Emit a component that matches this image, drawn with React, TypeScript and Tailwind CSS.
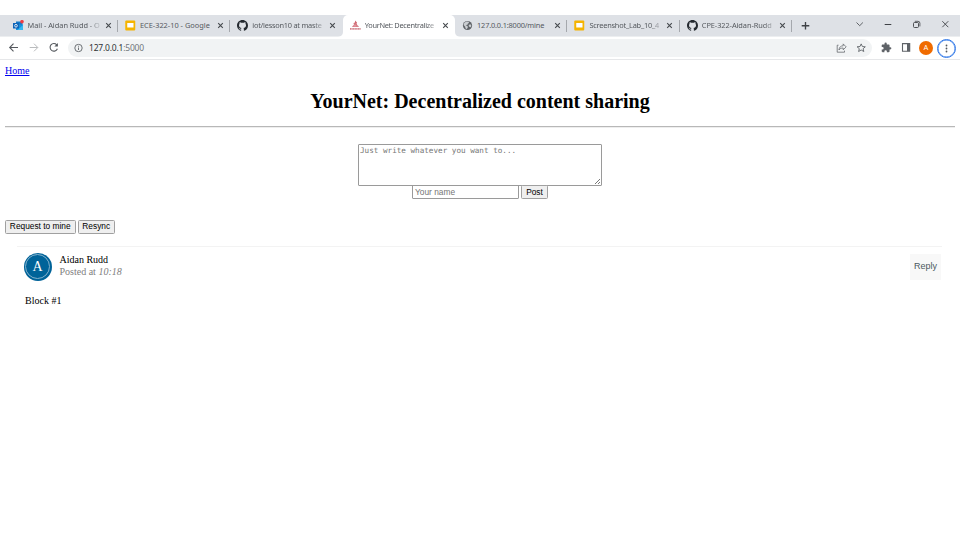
import React from "react";

type Kind = "mail" | "slides" | "github" | "net" | "globe";

function Favicon({ kind }: { kind: Kind }) {
  const cls = "block h-[11px] w-[11px] shrink-0";
  if (kind === "mail")
    return (
      <svg className={cls} viewBox="0 0 22 22">
        <path d="M6 3h13v9H6z" fill="#1479c9" />
        <path d="M6 9h14v11H6z" fill="#1490df" />
        <path d="M20 10v10H9z" fill="#35b8f1" />
        <path d="M0 6h12v11H0z" fill="#0f64b8" />
        <circle cx="6" cy="11.5" r="2.7" fill="none" stroke="#fff" strokeWidth="1.6" />
        <circle cx="18" cy="3.5" r="3.6" fill="#ef3b43" />
      </svg>
    );
  if (kind === "slides")
    return (
      <svg className={cls} viewBox="0 0 22 22">
        <rect x="0.5" y="1" width="20" height="20" rx="2" fill="#f5b400" />
        <rect x="4.5" y="6" width="12.500" height="9" fill="#fff" />
      </svg>
    );
  if (kind === "github")
    return (
      <svg className={cls} viewBox="0 0 16 16">
        <path
          fill="#24292f"
          d="M8 0C3.58 0 0 3.58 0 8c0 3.54 2.29 6.53 5.47 7.59.4.07.55-.17.55-.38 0-.19-.01-.82-.01-1.49-2.01.37-2.53-.49-2.69-.94-.09-.23-.48-.94-.82-1.13-.28-.15-.68-.52-.01-.53.63-.01 1.08.58 1.23.82.72 1.21 1.87.87 2.33.66.07-.52.28-.87.51-1.07-1.78-.2-3.64-.89-3.64-3.95 0-.87.31-1.59.82-2.15-.08-.2-.36-1.02.08-2.12 0 0 .67-.21 2.2.82a7.6 7.6 0 0 1 4 0c1.53-1.04 2.2-.82 2.2-.82.44 1.1.16 1.92.08 2.12.51.56.82 1.27.82 2.15 0 3.07-1.87 3.75-3.65 3.95.29.25.54.73.54 1.48 0 1.07-.01 1.93-.01 2.2 0 .21.15.46.55.38A8.01 8.01 0 0 0 16 8c0-4.42-3.58-8-8-8z"
        />
      </svg>
    );
  if (kind === "net")
    return (
      <svg className={cls} viewBox="0 0 22 22">
        <path d="M10 1l4 4-1 3 5 6H4l4-5-1-3 3-1z" fill="#cf6670" />
        <path d="M10 7v6M5 12h12" stroke="#f5d5d8" strokeWidth="1" />
        <path d="M0 17.5h22" stroke="#d3848d" strokeWidth="3.500" strokeDasharray="2.4 .7" />
      </svg>
    );
  return (
    <svg className={cls} viewBox="0 0 24 24">
      <circle cx="12" cy="12" r="10" fill="#5f6368" />
      <path d="M5 6l5-2.500 5 .5v2.500l-2.500 1.500v2L8 11.500l3.500 1.500 1.500 2.500-2.500 4.500-3-2-.5-3.500L3.500 11z" fill="#cbced2" />
      <path d="M15 10.500l3.500-1 2 3-1.500 3.500-2.500-.5-2-2.500z" fill="#cbced2" />
    </svg>
  );
}

const tabs: { kind: Kind; title: string; track: string }[] = [
  { kind: "mail", title: "Mail - Aidan Rudd - O", track: "tracking-[-0.03px]" },
  { kind: "slides", title: "ECE-322-10 - Google", track: "tracking-[0px]" },
  { kind: "github", title: "iot/lesson10 at maste", track: "tracking-[-0.25px]" },
  { kind: "net", title: "YourNet: Decentralize", track: "tracking-[-0.29px]" },
  { kind: "globe", title: "127.0.0.1:8000/mine", track: "tracking-[-0.18px]" },
  { kind: "slides", title: "Screenshot_Lab_10_4", track: "tracking-[-0.22px]" },
  { kind: "github", title: "CPE-322-Aidan-Rudd", track: "tracking-[-0.08px]" },
];

function Tab({ index }: { index: number }) {
  const t = tabs[index];
  const active = index === 3;
  const fade = index === 1 || index === 4 ? "" : "[mask-image:linear-gradient(to_right,black_84%,#0002)]";
  return (
    <div className={`relative flex h-[22px] w-[112.4px] shrink-0 items-center pb-px pl-[7px] ${active ? "rounded-t-[5px] bg-white" : ""}`}>
      <Favicon kind={t.kind} />
      <div className={`ml-[4px] w-[73px] whitespace-nowrap text-[7.400px] leading-[11px] text-[#55595e] ${fade} ${t.track}`}>
        {t.title}
      </div>
      <svg className="ml-[4px] h-[7px] w-[7px] shrink-0" viewBox="0 0 7 7">
        <path d="M1.200 1.200l4.600 4.600M5.800 1.200L1.200 5.800" stroke="#45494d" strokeWidth="1.100" />
      </svg>
      {index !== 2 && index !== 3 && <span className="absolute top-[5px] right-0 h-[12px] w-px bg-[#a5a8ad]" />}
      {active && (
        <>
          <svg className="absolute bottom-0 -left-[5px] h-[5px] w-[5px]" viewBox="0 0 5 5"><path d="M5 0v5H0a5 5 0 0 0 5-5" fill="#fff" /></svg>
          <svg className="absolute -right-[5px] bottom-0 h-[5px] w-[5px]" viewBox="0 0 5 5"><path d="M0 0v5h5a5 5 0 0 1-5-5" fill="#fff" /></svg>
        </>
      )}
    </div>
  );
}

function TabStrip() {
  return (
    <div className="flex h-[22px] bg-[linear-gradient(#dee1e6_21px,#eceef0_21px)] pl-[5.500px]">
      {tabs.map((_, i) => (
        <Tab key={i} index={i} />
      ))}
      <svg className="block h-[22px] w-[167px] shrink-0" viewBox="0 0 167 22" fill="none" stroke="#3f4246">
        <path d="M9.700 10.700h7.600M13.500 6.900v7.600" strokeWidth="1.350" />
        <path d="M64.500 7.500l3.200 3.200 3.200-3.200" strokeWidth=".8" />
        <path d="M92.700 9.500h6.600" />
        <rect x="121.500" y="7.500" width="5" height="5" rx="1" strokeWidth=".9" />
        <path d="M122.800 6.300h3.200q1.900 0 1.900 1.900v3.200" strokeWidth=".8" />
        <path d="M150.300 6.200l6 6M156.300 6.200l-6 6" strokeWidth=".9" />
      </svg>
    </div>
  );
}

function Toolbar() {
  return (
    <div className="flex h-[23px] items-center border-b border-[#e6e7e9] bg-white">
      <svg className="block h-[22px] w-[68px] shrink-0" viewBox="0 0 68 22" fill="none">
        <path d="M18 10.500H9.800M13.500 6.700l-3.800 3.800 3.800 3.800" stroke="#55595e" strokeWidth="1.100" />
        <path d="M29.700 10.500h8M34 6.700l3.800 3.800-3.800 3.800" stroke="#babcbe" strokeWidth="1" />
        <path d="M57.400 11.800a3.800 3.800 0 1 1-.7-4" stroke="#55595e" strokeWidth="1.100" />
        <path d="M57.900 5.900v3.500h-3.500z" fill="#55595e" />
      </svg>
      <div className="flex h-[18px] w-[804px] shrink-0 items-center rounded-full bg-[#f1f3f4] pl-[6px]">
        <svg className="block h-[9px] w-[9px] -translate-y-[0.500px]" viewBox="0 0 9 9">
          <circle cx="4.500" cy="4.500" r="3.700" fill="none" stroke="#5f6368" strokeWidth=".9" />
          <path d="M4.500 4v2.500M4.500 2.300v.9" stroke="#5f6368" strokeWidth=".9" />
        </svg>
        <span className="ml-[6px] text-[8.500px] leading-[12px] tracking-[-0.200px] text-[#303337]">
          127.0.0.1<span className="text-[#72767a]">:5000</span>
        </span>
        <svg className="ml-auto block h-[18px] w-[40px]" viewBox="0 0 40 18" fill="none" stroke="#5f6368">
          <path d="M6.500 6.200H5.200v7h7.300v-1.600M6.900 11c.4-3 2-4.200 4.300-4.200V4.900l3 3-3 2.900V9c-2 0-3.300.5-4.300 2z" strokeWidth=".75" />
          <path d="M29.200 4.900l1.200 2.600 2.900.3-2.200 1.900.7 2.800-2.600-1.500-2.600 1.500.7-2.800-2.200-1.900 2.900-.3z" strokeWidth=".9" />
        </svg>
      </div>
      <svg className="block h-[22px] w-[47px] shrink-0" viewBox="0 0 47 22">
        <path transform="translate(8.800 5.100) scale(.46)" fill="#5f6368" d="M20.500 11H19V7c0-1.100-.9-2-2-2h-4V3.500a2.500 2.500 0 0 0-5 0V5H4c-1.100 0-2 .9-2 2v3.800h1.500a2.700 2.700 0 0 1 0 5.400H2V20c0 1.100.9 2 2 2h3.800v-1.500a2.700 2.700 0 0 1 5.400 0V22H17c1.100 0 2-.9 2-2v-4h1.500a2.500 2.500 0 0 0 0-5z" />
        <path d="M30.500 6.600h7.200v7.600h-7.200z" fill="none" stroke="#5f6368" strokeWidth="1.100" />
        <path d="M35 6.500h3v7.700h-3z" fill="#5f6368" />
      </svg>
      <div className="flex h-[14px] w-[14px] shrink-0 items-center justify-center rounded-full bg-[#f06b00] font-[Roboto,sans-serif] text-[7.500px] text-white">A</div>
      <div className="relative z-10 ml-[4px] flex h-[19px] w-[19px] shrink-0 items-center justify-center rounded-full border border-[#3279e8] bg-white shadow-[inset_0_0_0_0.500px_#3279e8]">
        <svg className="block h-[17px] w-[17px]" viewBox="0 0 17 17" fill="#55595e">
          <circle cx="8.500" cy="5.500" r=".9" />
          <circle cx="8.500" cy="8.500" r=".9" />
          <circle cx="8.500" cy="11.500" r=".9" />
        </svg>
      </div>
    </div>
  );
}

const button =
  "h-[14px] rounded-[1.500px] border border-[#a0a0a0] bg-[#efefef] text-center font-['Liberation_Sans',Arial,sans-serif] text-[8.350px] whitespace-nowrap text-black";

export default function App() {
  return (
    <div className="h-[540px] w-[960px] overflow-hidden bg-white pt-[15px] font-['Liberation_Serif',serif] text-black">
      <header className="font-['Noto_Sans','Open_Sans',sans-serif]">
        <TabStrip />
        <Toolbar />
      </header>
      <main className="px-[5px] pt-[4px]">
        <a className="block w-fit text-[10px] leading-[13px] text-[#0000ee] underline">Home</a>
        <h1 className="mt-[12px] text-center text-[20px] leading-[24px] font-bold whitespace-nowrap">
          YourNet: Decentralized content sharing
        </h1>
        <hr className="mt-[13px] h-[2px] border-0 border-t border-[#b8b8b8] bg-[#eeeeee]" />
        <form className="mt-[16px] flex flex-col items-center">
          <div className="flex h-[42px] w-[244px] justify-between rounded-[1px] border border-[#9a9a9a] pl-[1px]">
            <span className="pt-px font-['DejaVu_Sans_Mono',monospace] text-[7.640px] leading-[10px] text-[#757575]">
              Just write whatever you want to...
            </span>
            <svg className="h-[7px] w-[7px] self-end" viewBox="0 0 7 7">
              <path d="M1 6l5-5M4 6l2-2" stroke="#555" strokeWidth=".8" />
            </svg>
          </div>
          <div className="-mt-px flex gap-[2px]">
            <div className="h-[14px] w-[107px] rounded-[1px] border border-[#9a9a9a] pl-[2px] font-['Liberation_Sans',Arial,sans-serif] text-[8.350px] leading-[12px] text-[#757575]">
              Your name
            </div>
            <div className={`w-[27px] leading-[12px] ${button}`}>Post</div>
          </div>
        </form>
        <div className="mt-[21px] flex gap-[2px]">
          <div className={`w-[70.500px] leading-[11px] ${button}`}>Request to mine</div>
          <div className={`w-[37.500px] leading-[11px] ${button}`}>Resync</div>
        </div>
        <article className="mr-[13px] ml-[12px] mt-[12px] border-t border-[#f3f3f3] pt-[6px]">
          <div className="flex">
            <div className="-mt-[0.500px] ml-[6.500px] flex h-[28px] w-[28px] items-center justify-center rounded-full bg-[#006399]">
              <div className="flex h-[25px] w-[25px] items-center justify-center rounded-full border border-[#84b2cd] text-[14px] leading-[22px] text-white">A</div>
            </div>
            <div className="ml-[8px] pt-[1px] text-[10px] leading-[12px]">
              <div>Aidan Rudd</div>
              <div className="text-[#808080]">
                Posted at <i>10:18</i>
              </div>
            </div>
            <div className="mt-[1px] mr-[1px] ml-auto flex h-[26px] w-[31px] items-center justify-center bg-[#f8f8f8] font-['Liberation_Sans',Arial,sans-serif] text-[9px] text-[#4a5960]">
              Reply
            </div>
          </div>
          <p className="mt-[14.500px] ml-[8px] text-[10px] leading-[12px]">Block #1</p>
        </article>
      </main>
    </div>
  );
}
